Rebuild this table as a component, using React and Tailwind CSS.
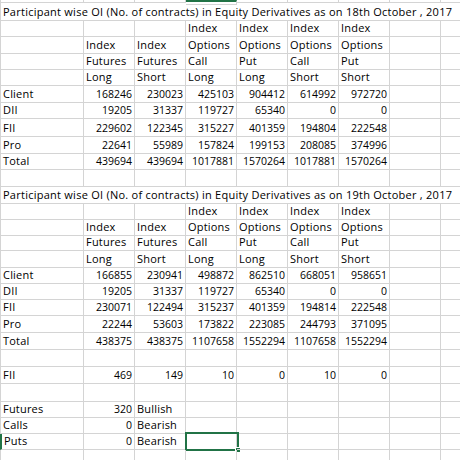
import React from "react";

const WIDTHS = ["w-[84px]", "w-[51px]", "w-[51px]", "w-[51px]", "w-[51px]", "w-[51px]", "w-[51px]", "w-[51px]", "w-[51px]"];

const L = (t) => ({ t, a: "l" });
const R = (t) => ({ t, a: "r" });

function dataRow(label, nums) {
  return [L(label), ...nums.map((n) => R(String(n))), null, null];
}

const rows = [
  { h: "h-[3px]", kind: "top" },
  { h: "h-[18px]", title: "Participant wise OI (No. of contracts) in Equity Derivatives as on 18th October , 2017" },
  { h: "h-[16px]", cells: [null, null, null, L("Index"), L("Index"), L("Index"), L("Index"), null, null] },
  { h: "h-[17px]", cells: [null, L("Index"), L("Index"), L("Options"), L("Options"), L("Options"), L("Options"), null, null] },
  { h: "h-[16px]", cells: [null, L("Futures"), L("Futures"), L("Call"), L("Put"), L("Call"), L("Put"), null, null] },
  { h: "h-[16px]", cells: [null, L("Long"), L("Short"), L("Long"), L("Long"), L("Short"), L("Short"), null, null] },
  { h: "h-[17px]", cells: dataRow("Client", [168246, 230023, 425103, 904412, 614992, 972720]) },
  { h: "h-[16px]", cells: dataRow("DII", [19205, 31337, 119727, 65340, 0, 0]) },
  { h: "h-[18px]", cells: dataRow("FII", [229602, 122345, 315227, 401359, 194804, 222548]) },
  { h: "h-[17px]", cells: dataRow("Pro", [22641, 55989, 157824, 199153, 208085, 374996]) },
  { h: "h-[16px]", cells: dataRow("Total", [439694, 439694, 1017881, 1570264, 1017881, 1570264]) },
  { h: "h-[17px]", cells: [] },
  { h: "h-[17px]", title: "Participant wise OI (No. of contracts) in Equity Derivatives as on 19th October , 2017" },
  { h: "h-[16px]", cells: [null, null, null, L("Index"), L("Index"), L("Index"), L("Index"), null, null] },
  { h: "h-[16px]", cells: [null, L("Index"), L("Index"), L("Options"), L("Options"), L("Options"), L("Options"), null, null] },
  { h: "h-[15px]", cells: [null, L("Futures"), L("Futures"), L("Call"), L("Put"), L("Call"), L("Put"), null, null] },
  { h: "h-[17px]", cells: [null, L("Long"), L("Short"), L("Long"), L("Long"), L("Short"), L("Short"), null, null] },
  { h: "h-[16px]", cells: dataRow("Client", [166855, 230941, 498872, 862510, 668051, 958651]) },
  { h: "h-[16px]", cells: dataRow("DII", [19205, 31337, 119727, 65340, 0, 0]) },
  { h: "h-[16px]", cells: dataRow("FII", [230071, 122494, 315237, 401359, 194814, 222548]) },
  { h: "h-[17px]", cells: dataRow("Pro", [22244, 53603, 173822, 223085, 244793, 371095]) },
  { h: "h-[17px]", cells: dataRow("Total", [438375, 438375, 1107658, 1552294, 1107658, 1552294]) },
  { h: "h-[17px]", cells: [] },
  { h: "h-[17px]", cells: dataRow("FII", [469, 149, 10, 0, 10, 0]) },
  { h: "h-[18px]", cells: [] },
  { h: "h-[16px]", cells: [L("Futures"), R("320"), L("Bullish"), null, null, null, null, null, null] },
  { h: "h-[16px]", cells: [L("Calls"), R("0"), L("Bearish"), null, null, null, null, null, null] },
  { h: "h-[16px]", kind: "sel", cells: [L("Puts"), R("0"), L("Bearish"), null, null, null, null, null, null] },
  { h: "h-[16px]", cells: [] },
];

function Row({ row }) {
  if (row.title) {
    return (
      <div className={`flex ${row.h} w-[491px] shrink-0 border-b border-l border-[#d4d4d4]`}>
        <div className="flex items-end pb-[2px] pl-[2px] whitespace-nowrap text-[11px] tracking-[0.25px]">{row.title}</div>
      </div>
    );
  }
  return (
    <div className={`flex ${row.h} shrink-0`}>
      {WIDTHS.map((w, i) => {
        const c = row.cells ? row.cells[i] : null;
        let cls = `relative flex ${w} shrink-0 border-b border-r border-[#d4d4d4] items-end pb-[2px] whitespace-nowrap`;
        if (i === 0) cls += " border-l";
        if (row.kind === "top" && i === 3) cls += " border-t-2 border-t-[#217346]";
        if (row.kind === "sel" && i === 0) cls += " border-l-2 border-l-[#217346]";
        if (c && c.a === "r") cls += " justify-end pr-[2px]";
        if (c && c.a === "l") cls += " justify-start pl-[2px] text-[11px] tracking-[0.2px]";
        return (
          <div key={i} className={cls}>
            {c ? c.t : null}
            {row.kind === "sel" && i === 3 ? (
              <>
                <div className="absolute left-[-1px] top-[-2px] w-[54px] h-[19px] border-2 border-[#217346]" />
                <div className="absolute left-[49px] top-[13px] w-[6px] h-[6px] bg-[#217346] border border-white" />
              </>
            ) : null}
          </div>
        );
      })}
    </div>
  );
}

export default function App() {
  return (
    <div className="w-[460px] h-[460px] overflow-hidden bg-white text-black text-[10.5px] leading-[12px] font-['Open_Sans',Arial,sans-serif]">
      <div className="flex flex-col w-[491px]">
        {rows.map((r, i) => (
          <Row key={i} row={r} />
        ))}
      </div>
    </div>
  );
}
